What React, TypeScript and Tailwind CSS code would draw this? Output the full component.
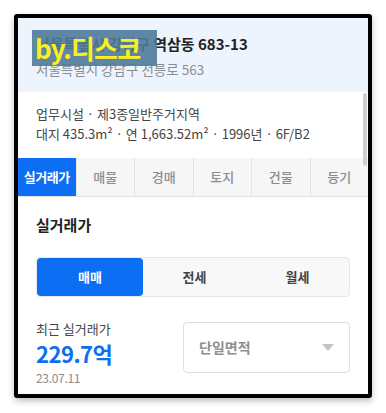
import React from 'react';

const tabs = ['실거래가', '매물', '경매', '토지', '건물', '등기'];

export default function App() {
  return (
    <div
      className="w-[386px] h-[413px] bg-white pt-[14px] pl-[14px]"
      style={{ fontFamily: '"Noto Sans CJK KR", "Noto Sans", sans-serif' }}
    >
      <div className="relative w-[358px] h-[384px] border-4 border-black rounded-[3px] overflow-hidden shadow-[0_3px_6px_rgba(0,0,0,0.25)]">
        {/* 주소 헤더 */}
        <div className="h-[74px] bg-[#eef4fd] pl-[18px] pt-[15px]">
          <div className="text-[15px] font-bold text-[#222] leading-[22px]">
            서울특별시 강남구 역삼동 683-13
          </div>
          <div className="text-[13.5px] text-[#8a8f96] leading-[18px] mt-[5px]">
            서울특별시 강남구 선릉로 563
          </div>
        </div>

        {/* 건물 정보 */}
        <div className="h-[66px] pl-[18px] pt-[12px] text-[13px] text-[#444] leading-[20px]">
          <div>업무시설 · 제3종일반주거지역</div>
          <div>대지 435.3m² · 연 1,663.52m² · 1996년 · 6F/B2</div>
        </div>

        {/* 탭 */}
        <div className="flex h-[39px] border-b border-[#e3e3e3] bg-[#f6f6f6]">
          {tabs.map((t, i) => (
            <div
              key={t}
              className={
                i === 0
                  ? 'flex-1 flex items-center justify-center bg-[#0b6ef3] text-white text-[13px] font-bold tracking-[-0.5px]'
                  : 'flex-1 flex items-center justify-center border-l border-[#e3e3e3] text-[#8d8d8d] text-[13px] font-medium'
              }
            >
              {t}
            </div>
          ))}
        </div>

        {/* 실거래가 */}
        <div className="px-[18px]">
          <div className="pt-[17px] text-[15px] font-bold text-[#222] leading-[22px]">실거래가</div>

          <div className="mt-[21px] flex h-[40px] rounded-[4px] border border-[#e6e6e6] bg-[#f8f8f8] text-[13px] font-bold">
            <div className="w-[106px] flex items-center justify-center rounded-[4px] bg-[#0b6ef3] text-white">매매</div>
            <div className="flex-1 flex items-center justify-center text-[#444]">전세</div>
            <div className="flex-1 flex items-center justify-center text-[#444]">월세</div>
          </div>

          <div className="mt-[23px] flex justify-between">
            <div>
              <div className="text-[13px] text-[#444] leading-[18px]">최근 실거래가</div>
              <div className="text-[22px] font-bold text-[#0b6ef3] leading-[30px] tracking-[-0.5px]">229.7억</div>
              <div className="text-[12px] text-[#8a8a8a] leading-[16px] mt-[2px] tracking-[-0.3px]">23.07.11</div>
            </div>
            <div className="w-[167px] h-[51px] mt-[2px] rounded-[4px] border border-[#dedede] flex items-center justify-between pl-[15px] pr-[15px]">
              <span className="text-[14px] font-bold text-[#8f8f8f]">단일면적</span>
              <svg width="12" height="7" viewBox="0 0 12 7">
                <path d="M0 0 L12 0 L6 7 Z" fill="#c4c4c4" />
              </svg>
            </div>
          </div>
        </div>

        {/* 스크롤바 */}
        <div className="absolute left-[345px] top-[75px] w-[4px] h-[73px] rounded-full bg-[#cfcfcf]" />

        {/* 워터마크 */}
        <div className="absolute left-[14px] top-[12px] w-[125px] h-[36px] bg-[#4f7a99]/90 flex items-center pl-[3px]">
          <span className="text-[26px] font-bold text-[#fbee22] tracking-[-0.8px] leading-none">by.디스코</span>
        </div>
      </div>
    </div>
  );
}
